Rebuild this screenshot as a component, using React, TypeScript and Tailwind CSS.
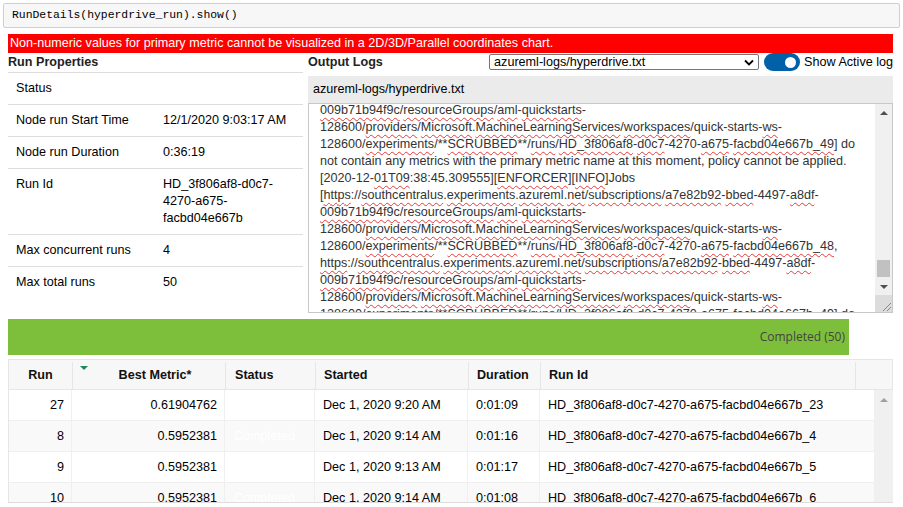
import React from "react";

const SPELL = new Set([
  "009b71b94f9c","resourceGroups","aml","quickstarts","providers","Microsoft","MachineLearningServices",
  "workspaces","ws","experiments","SCRUBBED","runs","HD_3f806af8","d0c7","a675","facbd04e667b_49",
  "facbd04e667b_48","01T09","ENFORCER","INFO","https","southcentralus","azureml","net","subscriptions",
  "a7e82b92","bbed","a8df",
]);

function LogLine({ text }: { text: string }) {
  const parts = text.split(/([A-Za-z0-9_]+)/);
  return (
    <div className="whitespace-nowrap leading-[17px] h-[17px]">
      {parts.map((p, i) =>
        SPELL.has(p) ? (
          <span key={i} className="underline decoration-wavy decoration-[#e23b3b] decoration-1 underline-offset-[3px]">
            {p}
          </span>
        ) : (
          <span key={i}>{p}</span>
        )
      )}
    </div>
  );
}

const LOG = [
  "009b71b94f9c/resourceGroups/aml-quickstarts-",
  "128600/providers/Microsoft.MachineLearningServices/workspaces/quick-starts-ws-",
  "128600/experiments/**SCRUBBED**/runs/HD_3f806af8-d0c7-4270-a675-facbd04e667b_49] do",
  "not contain any metrics with the primary metric name at this moment, policy cannot be applied.",
  "[2020-12-01T09:38:45.309555][ENFORCER][INFO]Jobs",
  "[https://southcentralus.experiments.azureml.net/subscriptions/a7e82b92-bbed-4497-a8df-",
  "009b71b94f9c/resourceGroups/aml-quickstarts-",
  "128600/providers/Microsoft.MachineLearningServices/workspaces/quick-starts-ws-",
  "128600/experiments/**SCRUBBED**/runs/HD_3f806af8-d0c7-4270-a675-facbd04e667b_48,",
  "https://southcentralus.experiments.azureml.net/subscriptions/a7e82b92-bbed-4497-a8df-",
  "009b71b94f9c/resourceGroups/aml-quickstarts-",
  "128600/providers/Microsoft.MachineLearningServices/workspaces/quick-starts-ws-",
  "128600/experiments/**SCRUBBED**/runs/HD_3f806af8-d0c7-4270-a675-facbd04e667b_49] do",
];

const PROPS: { k: string; v: string[] }[] = [
  { k: "Status", v: [""] },
  { k: "Node run Start Time", v: ["12/1/2020 9:03:17 AM"] },
  { k: "Node run Duration", v: ["0:36:19"] },
  { k: "Run Id", v: ["HD_3f806af8-d0c7-", "4270-a675-", "facbd04e667b"] },
  { k: "Max concurrent runs", v: ["4"] },
  { k: "Max total runs", v: ["50"] },
];

const ROWS = [
  { run: "27", metric: "0.61904762", started: "Dec 1, 2020 9:20 AM", dur: "0:01:09", id: "HD_3f806af8-d0c7-4270-a675-facbd04e667b_23" },
  { run: "8", metric: "0.5952381", started: "Dec 1, 2020 9:14 AM", dur: "0:01:16", id: "HD_3f806af8-d0c7-4270-a675-facbd04e667b_4" },
  { run: "9", metric: "0.5952381", started: "Dec 1, 2020 9:13 AM", dur: "0:01:17", id: "HD_3f806af8-d0c7-4270-a675-facbd04e667b_5" },
  { run: "10", metric: "0.5952381", started: "Dec 1, 2020 9:14 AM", dur: "0:01:08", id: "HD_3f806af8-d0c7-4270-a675-facbd04e667b_6" },
];

export default function App() {
  return (
    <div className="w-[903px] h-[507px] overflow-hidden bg-white text-[12.6px] text-black font-['Liberation_Sans',Arial,sans-serif] relative">
      {/* code cell */}
      <div className="mx-[3px] mt-[3px] h-[25px] border border-[#cfcfcf] rounded-[2px] bg-[#f7f7f7] flex items-center pl-[8px] font-['Liberation_Mono',monospace] text-[11.4px] text-black">
        RunDetails(hyperdrive_run).show()
      </div>

      <div className="pl-[8px] pr-[10px]">
        {/* red banner */}
        <div className="mt-[6px] h-[19px] bg-[#ff0000] text-white leading-[19px] pl-[2px] whitespace-nowrap">
          Non-numeric values for primary metric cannot be visualized in a 2D/3D/Parallel coordinates chart.
        </div>

        <div className="flex gap-[5px]">
          {/* left */}
          <div className="w-[295px] shrink-0">
            <div className="h-[19px] leading-[19px] font-bold text-[#222]">Run Properties</div>
            {PROPS.map((p, i) => (
              <div key={i} className="flex border-t border-[#dddddd] pt-[7px] pb-[7px] leading-[17px]">
                <div className="w-[155px] pl-[8px] shrink-0">{p.k}</div>
                <div>
                  {p.v.map((l, j) => (
                    <div key={j} className="h-[17px]">{l}</div>
                  ))}
                </div>
              </div>
            ))}
          </div>

          {/* right */}
          <div className="flex-1 min-w-0">
            <div className="h-[19px] flex items-center">
              <div className="font-bold text-[#222]">Output Logs</div>
              <div className="ml-auto flex items-center">
                <div className="w-[270px] h-[16px] border border-[#767676] rounded-[2px] flex items-center pl-[4px] pr-[4px] leading-none">
                  <span>azureml-logs/hyperdrive.txt</span>
                  <svg className="ml-auto" width="10" height="7" viewBox="0 0 10 7">
                    <path d="M1 1.5 L5 5.5 L9 1.5" fill="none" stroke="#000" strokeWidth="1.8" />
                  </svg>
                </div>
                <div className="ml-[5px] w-[36px] h-[18px] rounded-full bg-[#0060a8] flex items-center justify-end pr-[4px]">
                  <div className="w-[11px] h-[11px] rounded-full bg-white" />
                </div>
                <div className="ml-[4px] whitespace-nowrap">Show Active log</div>
              </div>
            </div>

            <div className="mt-[4px] h-[27px] bg-[#ebebeb] flex items-center pl-[5px]">azureml-logs/hyperdrive.txt</div>

            <div className="h-[210px] border border-[#c8c8c8] flex overflow-hidden">
              <div className="flex-1 overflow-hidden pl-[11px] text-[#333]">
                <div className="-mt-[2px]">
                  {LOG.map((l, i) => (
                    <LogLine key={i} text={l} />
                  ))}
                </div>
              </div>
              <div className="w-[17px] shrink-0 bg-[#f0f0f0] flex flex-col items-center">
                <div className="h-[17px] flex items-center justify-center">
                  <div className="w-0 h-0 border-l-[4px] border-r-[4px] border-b-[4px] border-l-transparent border-r-transparent border-b-[#505050]" />
                </div>
                <div className="flex-1 w-full relative">
                  <div className="absolute left-[2px] right-[2px] top-[139px] h-[17px] bg-[#c1c1c1]" />
                </div>
                <div className="h-[17px] flex items-center justify-center">
                  <div className="w-0 h-0 border-l-[4px] border-r-[4px] border-t-[4px] border-l-transparent border-r-transparent border-t-[#505050]" />
                </div>
                <div className="h-[17px] w-full bg-[#dcdcdc] flex items-end justify-end">
                  <svg width="12" height="12" viewBox="0 0 12 12">
                    <path d="M11 3 L3 11 M11 7 L7 11" stroke="#888" strokeWidth="1" />
                  </svg>
                </div>
              </div>
            </div>
          </div>
        </div>

        {/* progress bar */}
        <div className="mt-[6px] w-[841px] h-[36px] bg-[#7dbf3b] flex items-center justify-end pr-[4px] font-['Open_Sans',sans-serif] text-[12px] text-[#444]">
          Completed (50)
        </div>

        {/* table */}
        <div className="mt-[4px] h-[144px] overflow-hidden border-b border-[#dddddd]">
          <div className="flex h-[31px] pt-[2px] bg-[#f7f7f7] border border-[#e6e6e6] font-bold text-[#111]">
            <div className="w-[64px] flex items-center justify-center border-r border-[#e6e6e6]">Run</div>
            <div className="w-[153px] flex items-center justify-center pl-[12px] border-r border-[#e6e6e6] relative">
              <div className="absolute left-[7px] top-[4px] w-0 h-0 border-l-[4px] border-r-[4px] border-t-[4px] border-l-transparent border-r-transparent border-t-[#1e8a5a]" />
              Best Metric*
            </div>
            <div className="w-[90px] flex items-center pl-[9px] border-r border-[#e6e6e6]">Status</div>
            <div className="w-[153px] flex items-center pl-[8px] border-r border-[#e6e6e6]">Started</div>
            <div className="w-[72px] flex items-center pl-[8px] border-r border-[#e6e6e6]">Duration</div>
            <div className="w-[315px] flex items-center pl-[8px] border-r border-[#e6e6e6]">Run Id</div>
            <div className="flex-1" />
          </div>
          <div className="flex">
            <div className="w-[867px] border-l border-[#e6e6e6]">
              {ROWS.map((r, i) => (
                <div key={i} className={`flex h-[31px] border-b border-[#efefef] ${i % 2 === 1 ? "bg-[#f9f9f9]" : "bg-white"}`}>
                  <div className="w-[63px] flex items-center justify-end pr-[7px] border-r border-[#efefef]">{r.run}</div>
                  <div className="w-[153px] flex items-center justify-end pr-[7px] border-r border-[#efefef]">{r.metric}</div>
                  <div className="w-[90px] flex items-center pl-[9px] border-r border-[#efefef] text-white">Completed</div>
                  <div className="w-[153px] flex items-center pl-[8px] border-r border-[#efefef]">{r.started}</div>
                  <div className="w-[72px] flex items-center pl-[8px] border-r border-[#efefef]">{r.dur}</div>
                  <div className="flex-1 flex items-center pl-[8px] border-r border-[#efefef] whitespace-nowrap">{r.id}</div>
                </div>
              ))}
            </div>
            <div className="w-[18px] h-[120px] bg-[#f0f0f0] flex justify-center pt-[8px]">
              <div className="w-0 h-0 border-l-[4px] border-r-[4px] border-b-[4px] border-l-transparent border-r-transparent border-b-[#a0a0a0]" />
            </div>
          </div>
        </div>
      </div>
    </div>
  );
}
